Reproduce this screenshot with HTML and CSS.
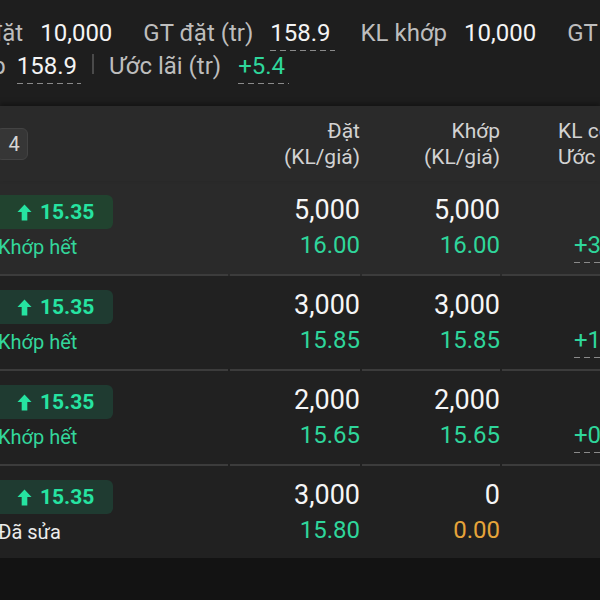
FILE: index.html
```html
<!DOCTYPE html>
<html lang="vi">
<head>
<meta charset="utf-8">
<title>Sổ lệnh</title>
<link rel="stylesheet" href="styles.css">
</head>
<body>
<div class="summary">
  <div class="sum-line l1">
    <span class="lbl">KL đặt</span><span class="val">10,000</span><span class="sep"></span>
    <span class="lbl">GT đặt (tr)</span><span class="val dash">158.9</span><span class="sep"></span>
    <span class="lbl">KL khớp</span><span class="val">10,000</span><span class="sep"></span>
    <span class="lbl">GT khớp (tr)</span><span class="val dash">158.9</span>
  </div>
  <div class="sum-line l2">
    <span class="lbl lead">GT khớp</span><span class="val dash">158.9</span><span class="sep"></span>
    <span class="lbl">Ước lãi (tr)</span><span class="val dash up">+5.4</span>
  </div>
</div>

<div class="table">
  <div class="thead">
    <div class="c1"><span class="count">4</span></div>
    <div class="c2">Đặt<br>(KL/giá)</div>
    <div class="c3">Khớp<br>(KL/giá)</div>
    <div class="c4">KL còn lại<br>Ước lãi (tr)</div>
  </div>

  <div class="row hl">
    <div class="cell c1">
      <span class="badge"><svg class="arrow" viewBox="0 0 16 18"><path d="M8 0.5 L15.5 8.5 H11 V17.5 H5 V8.5 H0.5 Z"/></svg>15.35</span>
      <div class="status up">Khớp hết</div>
    </div>
    <div class="cell c2"><div class="qty">5,000</div><div class="price up">16.00</div></div>
    <div class="cell c3"><div class="qty">5,000</div><div class="price up">16.00</div></div>
    <div class="cell c4"><span class="pl up">+3.25</span></div>
  </div>

  <div class="row">
    <div class="cell c1">
      <span class="badge"><svg class="arrow" viewBox="0 0 16 18"><path d="M8 0.5 L15.5 8.5 H11 V17.5 H5 V8.5 H0.5 Z"/></svg>15.35</span>
      <div class="status up">Khớp hết</div>
    </div>
    <div class="cell c2"><div class="qty">3,000</div><div class="price up">15.85</div></div>
    <div class="cell c3"><div class="qty">3,000</div><div class="price up">15.85</div></div>
    <div class="cell c4"><span class="pl up">+1.5</span></div>
  </div>

  <div class="row">
    <div class="cell c1">
      <span class="badge"><svg class="arrow" viewBox="0 0 16 18"><path d="M8 0.5 L15.5 8.5 H11 V17.5 H5 V8.5 H0.5 Z"/></svg>15.35</span>
      <div class="status up">Khớp hết</div>
    </div>
    <div class="cell c2"><div class="qty">2,000</div><div class="price up">15.65</div></div>
    <div class="cell c3"><div class="qty">2,000</div><div class="price up">15.65</div></div>
    <div class="cell c4"><span class="pl up">+0.6</span></div>
  </div>

  <div class="row last">
    <div class="cell c1">
      <span class="badge"><svg class="arrow" viewBox="0 0 16 18"><path d="M8 0.5 L15.5 8.5 H11 V17.5 H5 V8.5 H0.5 Z"/></svg>15.35</span>
      <div class="status plain">Đã sửa</div>
    </div>
    <div class="cell c2"><div class="qty">3,000</div><div class="price up">15.80</div></div>
    <div class="cell c3"><div class="qty">0</div><div class="price warn">0.00</div></div>
    <div class="cell c4"></div>
  </div>
</div>
</body>
</html>
```

FILE: styles.css
```css
* { box-sizing: border-box; }

html, body {
  margin: 0;
  padding: 0;
}

body {
  width: 600px;
  height: 600px;
  overflow: hidden;
  background: #131313;
  font-family: Roboto, "Noto Sans", "DejaVu Sans", sans-serif;
  color: #f2f2f2;
}

/* ---------- summary ---------- */
.summary {
  background: #1e1e1e;
  padding: 17px 0 23px;
  height: 106px;
}

.sum-line {
  display: flex;
  align-items: baseline;
  white-space: nowrap;
  font-size: 24px;
  line-height: 33px;
}

.l1 { margin-left: -46px; }
.l2 { margin-left: -83px; }

.lbl {
  color: #bdbdbd;
  margin-right: 17px;
}

.lbl.lead { margin-right: 11px; }

.val {
  color: #f4f4f4;
  margin-right: 16px;
}

.val.dash {
  padding-bottom: 1px;
  margin-bottom: -1px;
  padding-right: 4px;
  margin-right: 11px;
  background-image: repeating-linear-gradient(to right, #8a8a8a 0 6px, transparent 6px 10px);
  background-size: 100% 1.5px;
  background-repeat: no-repeat;
  background-position: left bottom;
}

.val.up { color: #2fd69b; }

.sep {
  display: inline-block;
  width: 2px;
  height: 20px;
  background: #4a4a4a;
  margin: 0 15px -5px 0;
}

/* ---------- table ---------- */
.table {
  background: #212121;
}

.thead,
.row {
  display: grid;
  grid-template-columns: 228px 130px 138px 1fr;
  column-gap: 2px;
}

.thead {
  background: #2a2a2a;
  height: 75px;
  padding-top: 12px;
  font-size: 21px;
  line-height: 26px;
  color: #d2d2d2;
  white-space: nowrap;
  box-shadow: 0 -3px 5px rgba(0, 0, 0, 0.35);
  position: relative;
}

.thead .c1 {
  align-self: center;
  margin-top: -12px;
}

.thead .c2,
.thead .c3 { text-align: right; }

.thead .c4 { padding-left: 56px; }

.count {
  display: inline-flex;
  align-items: center;
  justify-content: center;
  width: 32px;
  height: 32px;
  margin-left: -4px;
  padding-left: 4px;
  border-radius: 6px;
  background: #363636;
  border: 1px solid #434343;
  color: #d6d6d6;
  font-size: 20px;
}

.row.hl { background: #2a2a2a; }

.cell {
  height: 95px;
  border-bottom: 2px solid #3c3c3c;
  padding-top: 14px;
  white-space: nowrap;
}

.row.last .cell {
  height: 92px;
  border-bottom: none;
}

.cell.c2,
.cell.c3 { text-align: right; }

.badge {
  display: inline-flex;
  align-items: center;
  height: 34px;
  margin-left: -14px;
  padding: 0 19px 0 31px;
  border-radius: 6px;
  background: #1f3b31;
  color: #26e3a1;
  font-size: 21px;
  font-weight: 700;
}

.row.hl .badge { background: #21432f; }

.arrow {
  width: 15px;
  height: 17px;
  margin-right: 8px;
  fill: #26e3a1;
}

.status {
  margin-top: 6px;
  margin-left: -2px;
  font-size: 20px;
  line-height: 24px;
}

.status.up { color: #33d69b; }
.status.plain { color: #ececec; }

.qty {
  font-size: 27px;
  line-height: 30px;
  color: #f6f6f6;
}

.price {
  margin-top: 5px;
  font-size: 24px;
  line-height: 30px;
}

.up { color: #2fd69b; }
.warn { color: #e6a43a; }

.cell.c4 { padding-top: 49px; padding-left: 72px; }

.pl {
  display: inline-block;
  font-size: 24px;
  line-height: 30px;
  padding-bottom: 3px;
  background-image: repeating-linear-gradient(to right, #8a8a8a 0 6px, transparent 6px 10px);
  background-size: 100% 1.5px;
  background-repeat: no-repeat;
  background-position: left bottom;
}
```
